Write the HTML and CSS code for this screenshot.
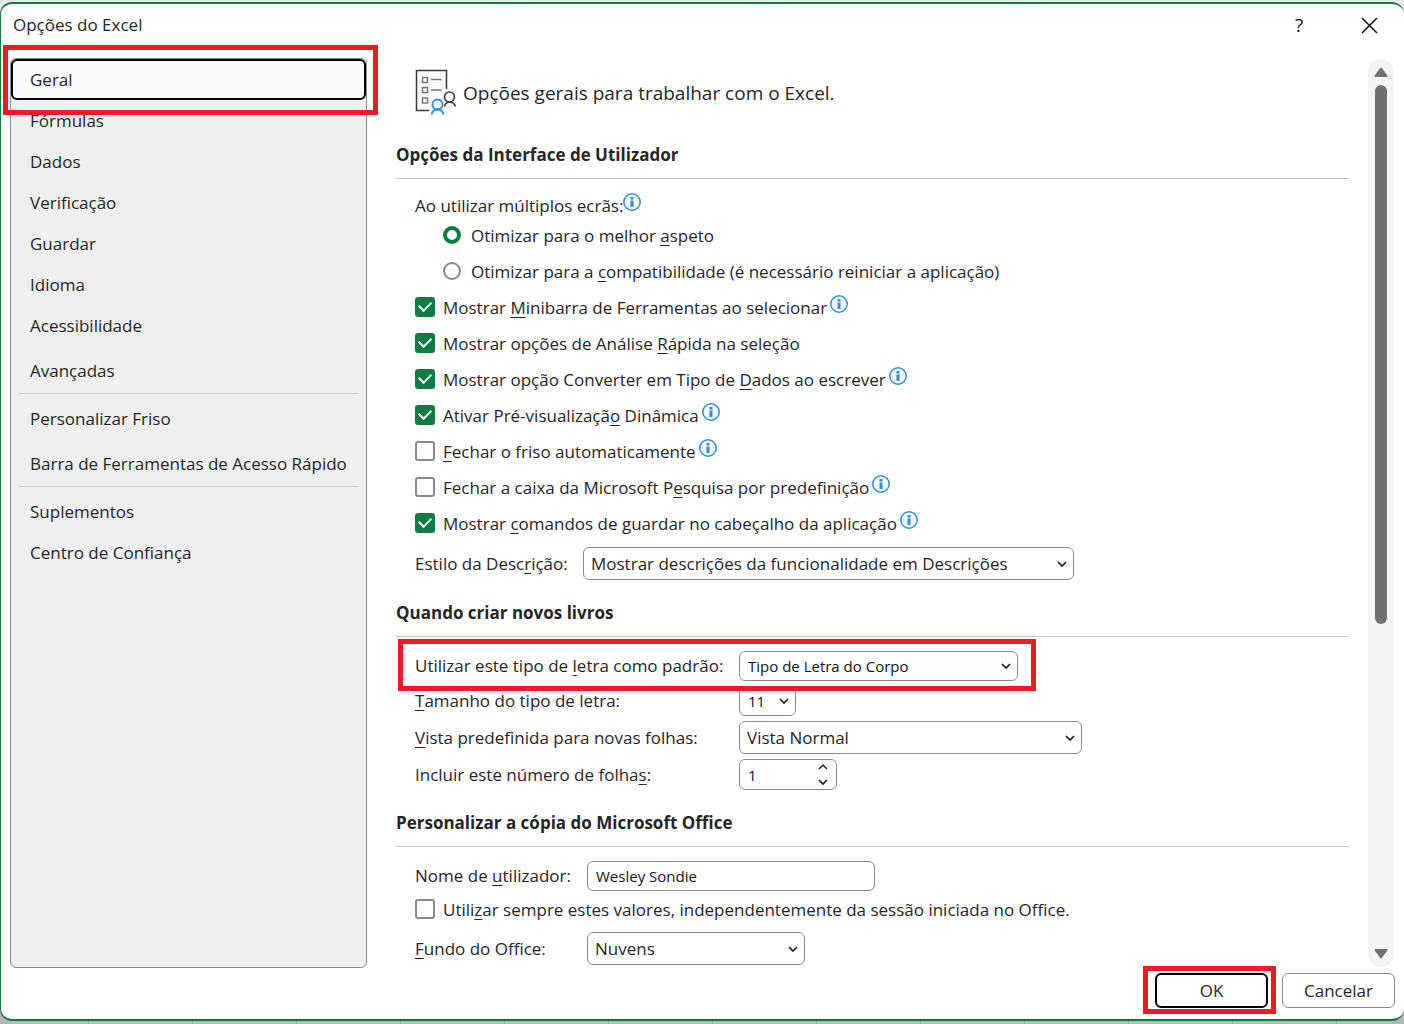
FILE: index.html
```html
<!DOCTYPE html>
<html lang="pt-PT">
<head>
<meta charset="utf-8">
<title>Opções do Excel</title>
<meta name="viewport" content="width=device-width, initial-scale=1">
<link rel="stylesheet" href="styles.css">
</head>
<body>
<svg class="sprite" aria-hidden="true">
  <symbol id="info" viewBox="0 0 18 18"><circle cx="9" cy="9" r="8.2" fill="#f7fbfe" stroke="#2b90d1" stroke-width="1.5"/><path d="M7.500 4h3v2.500h-3zM7.500 7.600h3V14h-3z" fill="#2b90d1"/></symbol>
  <symbol id="down" viewBox="0 0 10 8"><path d="M1 2l4 4 4-4" fill="none" stroke="#1f1f1f" stroke-width="1.7"/></symbol>
  <symbol id="up" viewBox="0 0 10 8"><path d="M1 6l4-4 4 4" fill="none" stroke="#1f1f1f" stroke-width="1.5"/></symbol>
</svg>
<div class="dialog" role="dialog" aria-labelledby="dialog-title">
  <header class="titlebar">
    <h1 id="dialog-title">Opções do Excel</h1>
    <button class="caption help" type="button" aria-label="Ajuda">?</button>
    <button class="caption close" type="button" aria-label="Fechar"><svg width="17" height="17" viewBox="0 0 17 17"><path d="M1 1l15 15M16 1L1 16" stroke="#111" stroke-width="1.5"/></svg></button>
  </header>

  <div class="main">
    <nav class="sidebar">
      <a class="item selected marked" href="#geral">Geral</a>
      <a class="item" href="#formulas">Fórmulas</a>
      <a class="item" href="#dados">Dados</a>
      <a class="item" href="#verificacao">Verificação</a>
      <a class="item" href="#guardar">Guardar</a>
      <a class="item" href="#idioma">Idioma</a>
      <a class="item" href="#acessibilidade">Acessibilidade</a>
      <a class="item last" href="#avancadas">Avançadas</a>
      <hr>
      <a class="item" href="#friso">Personalizar Friso</a>
      <a class="item last" href="#barra">Barra de Ferramentas de Acesso Rápido</a>
      <hr>
      <a class="item" href="#suplementos">Suplementos</a>
      <a class="item" href="#confianca">Centro de Confiança</a>
    </nav>

    <main class="content" id="geral">
      <div class="intro">
        <svg width="42" height="46" viewBox="0 0 42 46" fill="none">
          <path d="M2 2h29v23l-9 4-6 12H2z" fill="#fafafa"/>
          <path d="M14 41.500H1.500V1.500H31.500V20" stroke="#3a3a3a" stroke-width="1.500"/>
          <path d="M7.500 8.500h5v5h-5zM7.500 18.500h5v5h-5zM7.500 29h5v5h-5zM16 10.500h10.500M16 21h10.500" stroke="#777" stroke-width="1.500"/>
          <circle cx="34.500" cy="28" r="5" stroke="#3a3a3a" stroke-width="1.600" fill="#fff"/>
          <path d="M29.500 37.500c.8-3 2.500-4.500 5-4.500s5 1.500 6 4.500" stroke="#3a3a3a" stroke-width="1.600"/>
          <circle cx="22.500" cy="35.500" r="5" stroke="#2b90d1" stroke-width="1.800" fill="#fff"/>
          <path d="M16.500 45.500c.8-3.500 3-5 6-5s5.200 1.500 6 5" stroke="#2b90d1" stroke-width="1.800"/>
        </svg>
        <p>Opções gerais para trabalhar com o Excel.</p>
      </div>

      <section>
        <h2>Opções da Interface de Utilizador</h2>
        <div class="body" role="radiogroup" aria-labelledby="screens">
          <div class="caption-row"><span id="screens">Ao utilizar múltiplos ecrãs:</span><svg class="info"><use href="#info"/></svg></div>
          <label class="check nested"><input type="radio" name="screens" checked><span>Otimizar para o melhor <u>a</u>speto</span></label>
          <label class="check nested"><input type="radio" name="screens"><span>Otimizar para a <u>c</u>ompatibilidade (é necessário reiniciar a aplicação)</span></label>
          <label class="check"><input type="checkbox" checked><span>Mostrar <u>M</u>inibarra de Ferramentas ao selecionar</span><svg class="info"><use href="#info"/></svg></label>
          <label class="check"><input type="checkbox" checked><span>Mostrar opções de Análise <u>R</u>ápida na seleção</span></label>
          <label class="check"><input type="checkbox" checked><span>Mostrar opção Converter em Tipo de <u>D</u>ados ao escrever</span><svg class="info"><use href="#info"/></svg></label>
          <label class="check"><input type="checkbox" checked><span>Ativar Pré-visualizaçã<u>o</u> Dinâmica</span><svg class="info"><use href="#info"/></svg></label>
          <label class="check"><input type="checkbox"><span><u>F</u>echar o friso automaticamente</span><svg class="info"><use href="#info"/></svg></label>
          <label class="check"><input type="checkbox"><span>Fechar a caixa da Microsoft P<u>e</u>squisa por predefinição</span><svg class="info"><use href="#info"/></svg></label>
          <label class="check"><input type="checkbox" checked><span>Mostrar <u>c</u>omandos de guardar no cabeçalho da aplicação</span><svg class="info"><use href="#info"/></svg></label>
          <div class="field tip">
            <label for="tip">Estilo da Desc<u>r</u>ição:</label>
            <span class="control w-tip"><select id="tip"><option>Mostrar descrições da funcionalidade em Descrições</option></select><svg class="chevron"><use href="#down"/></svg></span>
          </div>
        </div>
      </section>

      <section>
        <h2>Quando criar novos livros</h2>
        <div class="body stack">
          <div class="field book marked">
            <label for="font">Utilizar este tipo de <u>l</u>etra como padrão:</label>
            <span class="control small w-font"><select id="font"><option>Tipo de Letra do Corpo</option></select><svg class="chevron"><use href="#down"/></svg></span>
          </div>
          <div class="field book">
            <label for="size"><u>T</u>amanho do tipo de letra:</label>
            <span class="control small w-size"><select id="size"><option>11</option></select><svg class="chevron"><use href="#down"/></svg></span>
          </div>
          <div class="field book">
            <label for="view"><u>V</u>ista predefinida para novas folhas:</label>
            <span class="control w-view"><select id="view"><option>Vista Normal</option></select><svg class="chevron"><use href="#down"/></svg></span>
          </div>
          <div class="field book">
            <label for="sheets">Incluir este número de folha<u>s</u>:</label>
            <span class="control small number w-sheets"><input id="sheets" type="number" value="1"><span class="spin"><svg><use href="#up"/></svg><svg><use href="#down"/></svg></span></span>
          </div>
        </div>
      </section>

      <section>
        <h2>Personalizar a cópia do Microsoft Office</h2>
        <div class="body stack">
          <div class="field office">
            <label for="user">Nome de <u>u</u>tilizador:</label>
            <span class="control small w-user"><input id="user" type="text" value="Wesley Sondie"></span>
          </div>
          <label class="check tight"><input type="checkbox"><span>Utili<u>z</u>ar sempre estes valores, independentemente da sessão iniciada no Office.</span></label>
          <div class="field office">
            <label for="bg"><u>F</u>undo do Office:</label>
            <span class="control w-bg"><select id="bg"><option>Nuvens</option></select><svg class="chevron"><use href="#down"/></svg></span>
          </div>
        </div>
      </section>
    </main>

    <div class="scrollbar" aria-hidden="true">
      <svg width="14" height="10" viewBox="0 0 14 10"><path d="M7 1.500L12.500 9h-11z" fill="#707070" stroke="#707070" stroke-width="2" stroke-linejoin="round"/></svg>
      <div class="track"><div class="thumb"></div></div>
      <svg width="14" height="10" viewBox="0 0 14 10"><path d="M7 8.500L1.500 1h11z" fill="#707070" stroke="#707070" stroke-width="2" stroke-linejoin="round"/></svg>
    </div>
  </div>

  <footer class="actions">
    <span class="ok marked"><button class="btn default" type="button">OK</button></span>
    <button class="btn" type="button">Cancelar</button>
  </footer>
</div>
</body>
</html>
```
FILE: styles.css
```css
* { box-sizing: border-box; }

body {
  margin: 0;
  padding: 2px 0 3px;
  min-height: 100vh;
  font: 17px/24px "Open Sans", "Noto Sans", sans-serif;
  color: #262626;
  background:
    repeating-linear-gradient(90deg, transparent 0 88px, #9c9c9c 88px 89px, transparent 89px 104px) bottom / 100% 3px no-repeat,
    linear-gradient(#e9e9e9, #b8b8b8);
}

button, input, select { font: inherit; color: inherit; margin: 0; }
u { text-decoration-thickness: 1px; text-underline-offset: 3px; text-decoration-skip-ink: none; }
.sprite { position: absolute; width: 0; height: 0; }

.dialog {
  display: flex;
  flex-direction: column;
  min-height: calc(100vh - 5px);
  border: 2px solid #107c41;
  border-width: 2px 0 2px 1px;
  border-radius: 12px;
  background: #fff;
}

/* Title bar */
.titlebar { display: flex; align-items: center; height: 42px; margin-bottom: 12px; padding: 0 17px 0 12px; }
.titlebar h1 { flex: 1; margin: 0; font-size: 17px; font-weight: 400; }
.caption { display: grid; place-items: center; height: 32px; padding: 0; border: 0; background: none; color: #111; }
.help { width: 32px; margin-right: 36px; font-size: 19px; }
.close { width: 36px; }

/* Body of the dialog */
.main { flex: 1; display: grid; grid-template-columns: 357px minmax(0, 1fr) 26px; padding: 0 10px 0 9px; }
.sidebar { border: 1px solid #8a8a8a; border-radius: 6px; background: #efefef; }
.sidebar hr { height: 1px; margin: 2px 8px 4px; border: 0; background: #cfcfcf; }
.item { display: flex; align-items: center; height: 41px; padding: 0 19px; color: inherit; text-decoration: none; white-space: nowrap; }
.item.last { margin-top: 4px; }
.item.selected { padding: 0 17px; border: 2px solid #000; border-radius: 6px; background: #fafafa; }

/* Red frames laid over the marked controls */
.marked { position: relative; }
.marked::after { content: ""; position: absolute; z-index: 1; border: 5px solid #ed1c24; pointer-events: none; }
.item.marked::after { inset: -16px -14px -17px -10px; }
.field.marked { width: fit-content; }
.field.marked::after { inset: -12px -18px -10px -17px; }
.ok.marked::after { inset: -7px -8px -6px -12px; }

.content { padding: 1px 19px 0 29px; }
.intro { display: flex; align-items: center; gap: 6px; padding: 10px 0 28px 19px; }
.intro p { margin: 0; padding-top: 2px; font-size: 19px; }

section + section { margin-top: 21px; }
h2 { margin: 0; padding-bottom: 11px; border-bottom: 1px solid #c8c8c8; font-size: 17px; line-height: 24px; font-weight: 700; }
.body { padding: 14px 0 0 19px; }
.stack { display: flex; flex-direction: column; gap: 5px; }

.caption-row, .check { display: flex; align-items: center; }
.caption-row { height: 24px; }
.check { height: 36px; gap: 8px; }
.check span, .caption-row span { padding-top: 2px; }
.nested { margin-left: 28px; gap: 10px; }
.tight { margin: -5px 0 0; }
.info { width: 18px; height: 18px; margin-bottom: 6px; }
.check .info { margin-left: -5px; }

.check input { appearance: none; flex: none; display: grid; place-items: center; width: 20px; height: 20px; border: 2px solid #8a8a8a; border-radius: 3px; background: #fff; }
.check input[type="radio"] { width: 18px; height: 18px; border-radius: 50%; }
.check input[type="radio"]:checked { border: 4px solid #107c41; }
.check input[type="checkbox"]:checked { border-color: #107c41; background: #107c41; }
.check input[type="checkbox"]:checked::before { content: ""; width: 10px; height: 6px; margin-bottom: 4px; border: solid #fff; border-width: 0 0 2px 2px; transform: rotate(-45deg); }

.field { display: grid; align-items: center; }
.tip { grid-template-columns: 168px auto; margin-top: 6px; }
.book { grid-template-columns: 324px auto; }
.office { grid-template-columns: 172px auto; }

.control { position: relative; display: block; height: 33px; }
.control.small { height: 30px; font-size: 15px; color: #111; }
.control.number { height: 31px; }
.control select, .control input { appearance: none; width: 100%; height: 100%; padding: 0 7px; border: 1px solid #8a8a8a; border-radius: 6px; background: #fff; }
.control.small select, .control.small input { padding: 0 8px; }
.control input::-webkit-inner-spin-button { appearance: none; }
.chevron { position: absolute; right: 7px; top: calc(50% - 4px); width: 10px; height: 8px; pointer-events: none; }
.spin { position: absolute; right: 9px; top: 4px; bottom: 4px; display: flex; flex-direction: column; justify-content: space-between; }
.spin svg { width: 10px; height: 8px; }

.w-tip { width: 491px; }
.w-font { width: 279px; }
.w-size { width: 57px; }
.w-view { width: 343px; }
.w-sheets { width: 98px; }
.w-user { width: 288px; }
.w-bg { width: 218px; }

.scrollbar { display: flex; flex-direction: column; align-items: center; gap: 8px; margin: 1px 0; padding: 8px 0; border-radius: 13px; background: #f4f4f4; }
.track { flex: 1; width: 12px; }
.thumb { height: 63%; border-radius: 6px; background: #707070; }

/* Bottom buttons */
.actions { display: flex; justify-content: flex-end; gap: 14px; padding: 5px 9px 11px; }
.btn { display: block; width: 113px; height: 35px; padding: 0; border: 1px solid #8a8a8a; border-radius: 6px; background: #fff; }
.btn.default { border: 2px solid #000; }
```
